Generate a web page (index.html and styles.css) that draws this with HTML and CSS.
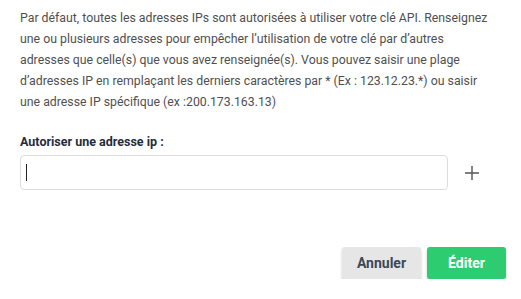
FILE: index.html
```html
<!DOCTYPE html>
<html lang="fr">
<head>
  <meta charset="UTF-8">
  <title>Restrictions IP</title>
  <link rel="stylesheet" href="styles.css">
</head>
<body>

  <div class="modal-body">
    <p class="intro">Par défaut, toutes les adresses IPs sont autorisées à utiliser votre clé API. Renseignez une ou plusieurs adresses pour empêcher l’utilisation de votre clé par d’autres adresses que celle(s) que vous avez renseignée(s). Vous pouvez saisir une plage d’adresses IP en remplaçant les derniers caractères par * (Ex : 123.12.23.*) ou saisir une adresse IP spécifique (ex :200.173.163.13)</p>

    <label for="ip">Autoriser une adresse ip :</label>
    <div class="ip-row">
      <div class="input-wrap">
        <input type="text" id="ip">
        <span class="caret"></span>
      </div>
      <button class="add-btn" type="button" aria-label="Ajouter">
        <svg width="14" height="14" viewBox="0 0 14 14"><path d="M7 0v14M0 7h14" stroke="#555" stroke-width="1.4" fill="none"/></svg>
      </button>
    </div>
  </div>

  <div class="modal-footer">
    <button class="btn btn-cancel" type="button">Annuler</button>
    <button class="btn btn-edit" type="button">Éditer</button>
  </div>

</body>
</html>
```

FILE: styles.css
```css
body {
  margin: 0;
  font-family: Roboto, "Liberation Sans", Arial, sans-serif;
  background: #fff;
  color: #4f4f4f;
}

.modal-body {
  padding: 8px 20px 0;
}

.intro {
  margin: 0;
  font-size: 12.3px;
  line-height: 21px;
  max-width: 476px;
}

label {
  display: block;
  margin-top: 20px;
  font-size: 12.5px;
  font-weight: bold;
  color: #1f2d3d;
  line-height: 18px;
}

.ip-row {
  display: flex;
  align-items: center;
  margin-top: 4px;
}

.input-wrap {
  position: relative;
}

.ip-row input {
  display: block;
  width: 428px;
  height: 35px;
  box-sizing: border-box;
  border: 1px solid #ddd;
  border-radius: 4px;
  padding: 0 8px;
  font-size: 14px;
  outline: none;
}

.caret {
  position: absolute;
  left: 6px;
  top: 9px;
  width: 1px;
  height: 17px;
  background: #222;
}

.add-btn {
  border: none;
  background: none;
  padding: 0;
  margin-left: 17px;
  width: 14px;
  height: 14px;
  display: flex;
  cursor: pointer;
}

.modal-footer {
  display: flex;
  justify-content: flex-end;
  gap: 6px;
  padding: 57px 15px 0;
}

.btn {
  width: 79px;
  height: 32px;
  border: none;
  border-radius: 3px;
  font-family: inherit;
  font-size: 14px;
  font-weight: bold;
  cursor: pointer;
  box-shadow: 0 2px 3px rgba(0,0,0,0.2);
}

.btn-cancel {
  background: #e6e6e6;
  color: #3c4858;
}

.btn-edit {
  background: #2ecc71;
  color: #fff;
}
```
